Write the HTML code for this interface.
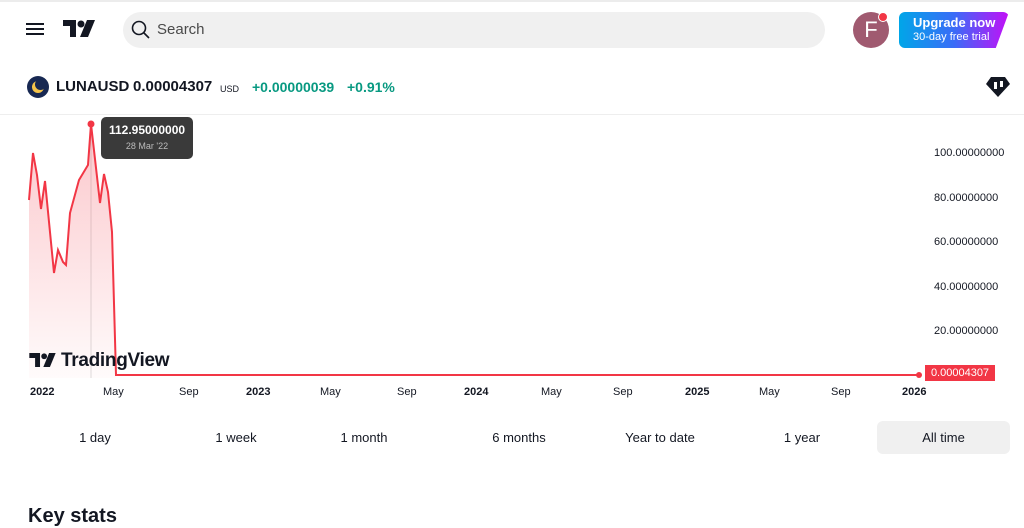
<!DOCTYPE html>
<html><head><meta charset="utf-8"><style>
*{margin:0;padding:0;box-sizing:border-box}
body{width:1024px;height:509px;overflow:hidden;background:#fff;font-family:"Liberation Sans",sans-serif;color:#131722;position:relative}
.a{position:absolute}
.axis{font-size:11px;color:#131722;font-weight:bold}
.yl{font-size:11px;left:934px}
.tb{font-size:13px;top:430px;text-align:center}
</style></head><body>
<div class="a" style="top:0;left:0;width:1024px;height:2px;background:#ececec"></div>
<div class="a" style="left:26px;top:23px;width:18px;height:2px;background:#131722;box-shadow:0 5px 0 #131722,0 10px 0 #131722"></div>
<svg class="a" style="left:63px;top:20px" width="32" height="18" viewBox="0 0 32 18"><path d="M0 0h13v17h-6v-11h-7z" fill="#131722"/><circle cx="18" cy="4" r="3.5" fill="#131722"/><path d="M24 0h8l-7 17h-8z" fill="#131722"/></svg>
<div class="a" style="left:123px;top:12px;width:702px;height:36px;border-radius:18px;background:#f0f0f0"></div>
<svg class="a" style="left:131px;top:20px" width="20" height="20" viewBox="0 0 20 20"><circle cx="8" cy="8" r="6.5" stroke="#131722" stroke-width="1.6" fill="none"/><path d="M13 13l5 5" stroke="#131722" stroke-width="1.6"/></svg>
<div class="a" style="left:157px;top:21px;font-size:15px;color:#4a4a4a">Search</div>
<div class="a" style="left:853px;top:12px;width:36px;height:36px;border-radius:50%;background:#a05a70;color:#fff;font-size:22px;text-align:center;line-height:36px">F</div>
<div class="a" style="left:878px;top:12px;width:10px;height:10px;border-radius:50%;background:#f23645;border:1px solid #fff"></div>
<div class="a" style="left:899px;top:12px;width:110px;height:36px;border-radius:6px;background:linear-gradient(90deg,#00a6e8,#3a6cf7,#c40ff7);clip-path:polygon(0 0,100% 0,88% 100%,0 100%);color:#fff;text-align:left;padding-left:14px">
<div style="font-size:13px;font-weight:bold;margin-top:3px">Upgrade now</div><div style="font-size:11px;margin-top:1px">30-day free trial</div></div>
<div class="a" style="left:27px;top:76px;width:22px;height:22px;border-radius:50%;background:#172852"></div>
<div class="a" style="left:32px;top:81px;width:12px;height:12px;border-radius:50%;background:#f5c44a"></div>
<div class="a" style="left:35px;top:79px;width:11px;height:11px;border-radius:50%;background:#172852"></div>
<div class="a" style="left:56px;top:78px;font-size:15px;font-weight:bold">LUNAUSD</div>
<div class="a" style="left:133px;top:78px;font-size:15px;font-weight:bold">0.00004307</div>
<div class="a" style="left:220px;top:84px;font-size:9px">USD</div>
<div class="a" style="left:252px;top:79px;font-size:14px;font-weight:bold;color:#089981">+0.00000039</div>
<div class="a" style="left:347px;top:79px;font-size:14px;font-weight:bold;color:#089981">+0.91%</div>
<svg class="a" style="left:986px;top:76px" width="24" height="22" viewBox="0 0 24 22"><path d="M5 1h14l5 7-12 13L0 8z" fill="#131722"/><rect x="8" y="6" width="3" height="7" fill="#fff"/><rect x="14" y="5" width="3" height="6" fill="#fff"/></svg>
<div class="a" style="top:114px;left:0;width:1024px;height:1px;background:#eee"></div>
<svg class="a" style="left:0;top:0" width="1024" height="509">
<defs><linearGradient id="g" x1="0" y1="0" x2="0" y2="1"><stop offset="0" stop-color="#f23645" stop-opacity=".28"/><stop offset="1" stop-color="#f23645" stop-opacity=".02"/></linearGradient></defs>
<line x1="91" y1="124" x2="91" y2="378" stroke="#ddd"/>
<path d="M29 200L33 153L37 175L41 209L45 181L54 273L58 250L63 262L66 265L70 213L79 180L88 165L91 124L100 203L104 174L108 192L112 232L116 375L116 378L29 378Z" fill="url(#g)"/>
<path d="M29 200L33 153L37 175L41 209L45 181L54 273L58 250L63 262L66 265L70 213L79 180L88 165L91 124L100 203L104 174L108 192L112 232L116 375L920 375" fill="none" stroke="#f23645" stroke-width="2"/>
<circle cx="91" cy="124" r="3.5" fill="#f23645"/><circle cx="919" cy="375" r="3" fill="#f23645"/>
</svg>
<div class="a" style="left:101px;top:117px;width:92px;height:42px;border-radius:5px;background:#3a3a3a;color:#fff;text-align:center">
<div style="font-size:12px;font-weight:bold;margin-top:6px">112.95000000</div><div style="font-size:9px;color:#bbb;margin-top:4px">28 Mar '22</div></div>
<svg class="a" style="left:29px;top:353px" width="27" height="14" viewBox="0 0 32 17"><path d="M0 0h13v17h-6v-11h-7z" fill="#131722"/><circle cx="18" cy="4" r="3.5" fill="#131722"/><path d="M24 0h8l-7 17h-8z" fill="#131722"/></svg>
<div class="a" style="left:61px;top:350px;font-size:19px;font-weight:600;letter-spacing:-.3px">TradingView</div>
<div class="a yl" style="top:147px">100.00000000</div>
<div class="a yl" style="top:192px">80.00000000</div>
<div class="a yl" style="top:236px">60.00000000</div>
<div class="a yl" style="top:281px">40.00000000</div>
<div class="a yl" style="top:325px">20.00000000</div>
<div class="a" style="left:925px;top:365px;width:70px;height:16px;background:#f23645;color:#fff;font-size:11px;line-height:16px;text-align:center">0.00004307</div>
<div class="a axis" style="left:30px;top:386px">2022</div>
<div class="a axis" style="left:103px;top:386px;font-weight:normal">May</div>
<div class="a axis" style="left:179px;top:386px;font-weight:normal">Sep</div>
<div class="a axis" style="left:246px;top:386px">2023</div>
<div class="a axis" style="left:320px;top:386px;font-weight:normal">May</div>
<div class="a axis" style="left:397px;top:386px;font-weight:normal">Sep</div>
<div class="a axis" style="left:464px;top:386px">2024</div>
<div class="a axis" style="left:541px;top:386px;font-weight:normal">May</div>
<div class="a axis" style="left:613px;top:386px;font-weight:normal">Sep</div>
<div class="a axis" style="left:685px;top:386px">2025</div>
<div class="a axis" style="left:759px;top:386px;font-weight:normal">May</div>
<div class="a axis" style="left:831px;top:386px;font-weight:normal">Sep</div>
<div class="a axis" style="left:902px;top:386px">2026</div>
<div class="a tb" style="left:45px;width:100px">1 day</div>
<div class="a tb" style="left:186px;width:100px">1 week</div>
<div class="a tb" style="left:314px;width:100px">1 month</div>
<div class="a tb" style="left:469px;width:100px">6 months</div>
<div class="a tb" style="left:610px;width:100px">Year to date</div>
<div class="a tb" style="left:752px;width:100px">1 year</div>
<div class="a" style="left:877px;top:421px;width:133px;height:33px;border-radius:6px;background:#f0f0f0;font-size:13px;text-align:center;line-height:33px">All time</div>
<div class="a" style="left:28px;top:505px;font-size:20px;font-weight:bold">Key stats</div>
</body></html>
